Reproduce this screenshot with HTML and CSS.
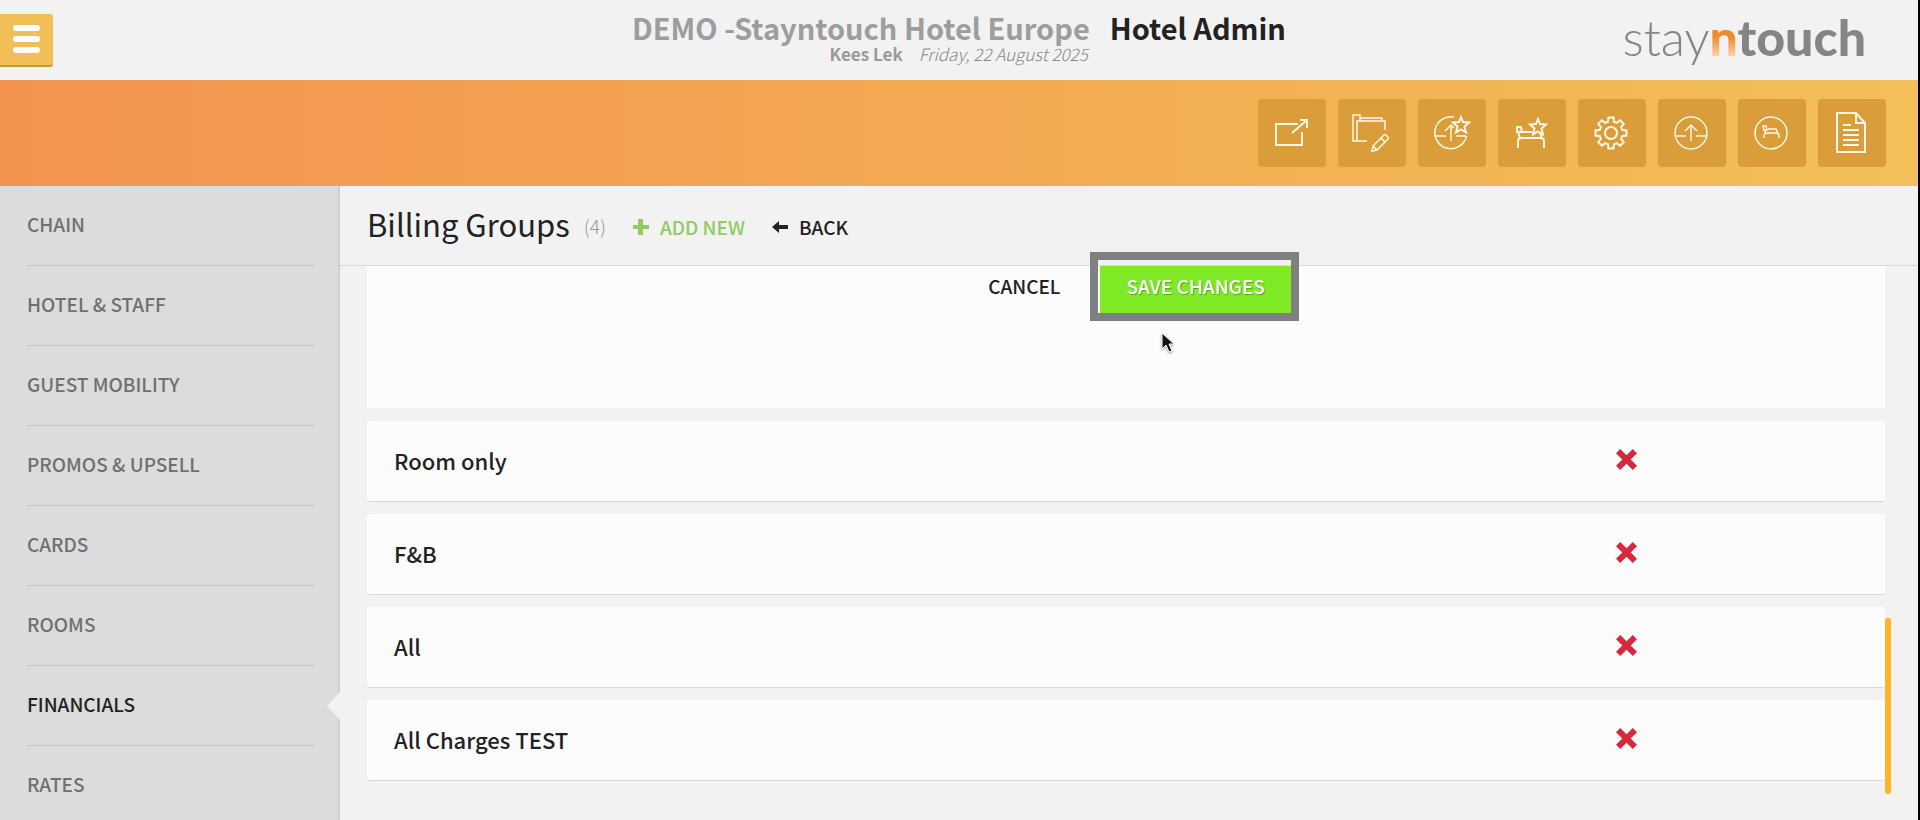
FILE: index.html
```
<!DOCTYPE html>
<html lang="en">
    <head>
        <meta charset="UTF-8" />
        <meta name="viewport" content="width=device-width, initial-scale=1.0" />
        <title>Stayntouch - Hotel Admin</title>
        <link rel="stylesheet" href="styles.css">
    </head>
    <body>
        <header class="header">
            <button type="button" class="menu-button" aria-label="Menu">
                <span></span>
                <span></span>
                <span></span>
            </button>
            <div class="header-title">
                <h1 class="hotel-name">DEMO -Stayntouch Hotel Europe</h1>
                <span class="page-name">Hotel Admin</span>
                <p class="user-info"><strong>Kees Lek</strong><em>Friday, 22 August 2025</em></p>
            </div>
            <div class="logo">stay<b class="logo-n">n</b><b>touch</b></div>
        </header>

        <div class="toolbar">
            <button type="button" class="tool" aria-label="Open">
                <svg viewBox="0 0 68 68">
                    <path d="M40 25H18v21h26V33M34 34l15-13M42 21h7v8" />
                </svg>
            </button>
            <button type="button" class="tool" aria-label="Edit folders">
                <svg viewBox="0 0 68 68" class="thin">
                    <path d="M29 42H15V16h7v3h22v2M19 42V22h28v9M19 22h3v-3" />
                    <path d="M34 52l1-5 11-11q1-1 2 0l2 2q1 1 0 2L39 51zM43 39l4 4M35 47l4 4" />
                </svg>
            </button>
            <button type="button" class="tool" aria-label="Special upgrades">
                <svg viewBox="0 0 68 68" class="thin">
                    <path d="M36 18a16 16 0 1 0 12.500 19" />
                    <path d="M33 42V27M27 32l6-6 3 3M17 37h11M38 37h10" />
                    <path class="bold" d="M43 18l2 5 6 .5-4.500 4 1.500 6-5-3-5 3 1.500-6-4.500-4 6-.5z" />
                </svg>
            </button>
            <button type="button" class="tool" aria-label="Special rooms">
                <svg viewBox="0 0 68 68">
                    <path d="M20 49v-7q0-3 4-3h18q4 0 4 3v7" />
                    <path d="M19 28h4l1 5h-5zM20 33l2 6M24 33h10M42 34l2 5" />
                    <path d="M40 20l2 5 6 .5-4.500 4 1.500 6-5-3-5 3 1.500-6-4.500-4 6-.5z" />
                </svg>
            </button>
            <button type="button" class="tool" aria-label="Settings">
                <svg viewBox="0 0 68 68">
                    <circle cx="33" cy="34" r="6" />
                    <path transform="translate(33 34)" d="M-3-11.300L-2.500-15.500H2.500L3-11.300 5.900-10.100 9.200-12.700 12.700-9.200 10.100-5.900 11.300-3 15.500-2.500V2.500L11.300 3 10.100 5.900 12.700 9.200 9.200 12.700 5.900 10.100 3 11.300 2.500 15.500H-2.500L-3 11.300-5.900 10.100-9.200 12.700-12.700 9.200-10.100 5.900-11.300 3-15.500 2.500V-2.500L-11.300-3-10.100-5.900-12.700-9.200-9.200-12.700-5.900-10.100z" />
                </svg>
            </button>
            <button type="button" class="tool" aria-label="Upgrades">
                <svg viewBox="0 0 68 68" class="thin">
                    <circle cx="33" cy="34" r="16" />
                    <path d="M33 42V26M27 32l6-6 6 6M17 37h11M38 37h11" />
                </svg>
            </button>
            <button type="button" class="tool" aria-label="Rooms">
                <svg viewBox="0 0 68 68" class="thin">
                    <circle cx="33" cy="34" r="16" />
                    <path d="M26 39v-2q0-3 4-3h7q4 0 4 3v2M25 27h3l1 4h-3zM26 31l2 3M30 30h8l2 4" />
                </svg>
            </button>
            <button type="button" class="tool" aria-label="Documents">
                <svg viewBox="0 0 68 68">
                    <path d="M38 14H19v39h28V24zV24h9M25 26h8M25 31h16M25 36h16M25 41h16M25 46h16" />
                </svg>
            </button>
        </div>

        <div class="layout">
            <nav class="sidebar">
                <a href="#">CHAIN</a>
                <a href="#">HOTEL &amp; STAFF</a>
                <a href="#">GUEST MOBILITY</a>
                <a href="#">PROMOS &amp; UPSELL</a>
                <a href="#">CARDS</a>
                <a href="#">ROOMS</a>
                <a href="#" class="active">FINANCIALS</a>
                <a href="#">RATES</a>
            </nav>

            <main class="content">
                <div class="content-header">
                    <h2>Billing Groups</h2>
                    <span class="count">(4)</span>
                    <button type="button" class="link-button add">
                        <svg viewBox="0 0 16 16"><path d="M5 0h5v6h6v4h-6v6H5v-6H0V6h5z" /></svg>
                        ADD NEW
                    </button>
                    <button type="button" class="link-button back">
                        <svg viewBox="0 0 16 16"><path d="M0 8l7-6v4h9v4H7v4z" /></svg>
                        BACK
                    </button>
                </div>

                <div class="groups">
                    <div class="form-card">
                        <button type="button" class="cancel-button">CANCEL</button>
                        <div class="save">
                            <button type="button" class="save-button">SAVE CHANGES</button>
                            <svg class="cursor" viewBox="0 0 14 22">
                                <path d="M1 1v16l4-4 3 7 3-1-3-7h5z" />
                            </svg>
                        </div>
                    </div>
                    <ul class="group-list">
                        <li>
                            <a href="#">Room only</a>
                            <button type="button" class="delete" aria-label="Delete Room only">
                                <svg viewBox="0 0 20 20"><path d="M0 4l4-4 6 6 6-6 4 4-6 6 6 6-4 4-6-6-6 6-4-4 6-6z" /></svg>
                            </button>
                        </li>
                        <li>
                            <a href="#">F&amp;B</a>
                            <button type="button" class="delete" aria-label="Delete F&amp;B">
                                <svg viewBox="0 0 20 20"><path d="M0 4l4-4 6 6 6-6 4 4-6 6 6 6-4 4-6-6-6 6-4-4 6-6z" /></svg>
                            </button>
                        </li>
                        <li>
                            <a href="#">All</a>
                            <button type="button" class="delete" aria-label="Delete All">
                                <svg viewBox="0 0 20 20"><path d="M0 4l4-4 6 6 6-6 4 4-6 6 6 6-4 4-6-6-6 6-4-4 6-6z" /></svg>
                            </button>
                        </li>
                        <li>
                            <a href="#">All Charges TEST</a>
                            <button type="button" class="delete" aria-label="Delete All Charges TEST">
                                <svg viewBox="0 0 20 20"><path d="M0 4l4-4 6 6 6-6 4 4-6 6 6 6-4 4-6-6-6 6-4-4 6-6z" /></svg>
                            </button>
                        </li>
                    </ul>
                    <div class="scrollbar"></div>
                </div>
            </main>
        </div>
    </body>
</html>
```
FILE: styles.css
```
* {
    box-sizing: border-box;
    margin: 0;
    padding: 0;
}

body {
    display: flex;
    flex-direction: column;
    height: 100vh;
    overflow: hidden;
    background-color: #f2f2f2;
    border-right: 2px solid #000;
    color: #222;
    font-family: "Noto Sans CJK SC", "Open Sans", sans-serif;
    font-size: 19px;
    line-height: 24px;
}

button {
    border: none;
    background: none;
    font: inherit;
    cursor: pointer;
}

a {
    color: inherit;
    text-decoration: none;
}

svg {
    display: block;
}

/* Header */
.header {
    display: grid;
    grid-template-columns: 1fr auto 1fr;
    align-items: center;
    height: 80px;
    flex-shrink: 0;
}

.menu-button {
    display: flex;
    flex-direction: column;
    align-items: center;
    justify-content: center;
    gap: 5px;
    width: 53px;
    height: 53px;
    background-color: #f2be57;
    border-bottom: 2px solid #c29846;
    border-radius: 0 3px 3px 0;
}

.menu-button span {
    width: 27px;
    height: 6px;
    border-radius: 3px;
    background-color: #fff;
}

.header-title {
    display: grid;
    grid-template-columns: auto auto;
    column-gap: 20px;
    padding-bottom: 7px;
}

.hotel-name,
.page-name {
    font-size: 29px;
    font-weight: 700;
    line-height: 34px;
}

.hotel-name {
    color: #9d9d9d;
}

.user-info {
    display: flex;
    justify-content: flex-end;
    gap: 16px;
    padding-right: 2px;
    color: #9a9a9a;
    font-size: 17px;
    line-height: 20px;
}

.user-info em {
    color: #888;
    font-weight: 300;
}

.logo {
    justify-self: end;
    padding: 0 52px 6px 0;
    color: #858585;
    font-family: Lato, sans-serif;
    font-size: 50px;
    font-weight: 300;
    line-height: 60px;
}

.logo b {
    font-weight: 900;
}

.logo .logo-n {
    background: linear-gradient(#f08a2c 50%, #fbd9b8 85%);
    background-clip: text;
    color: transparent;
}

/* Toolbar */
.toolbar {
    display: flex;
    align-items: center;
    justify-content: flex-end;
    gap: 12px;
    height: 106px;
    flex-shrink: 0;
    padding-right: 32px;
    background: linear-gradient(to right, #f3934f, #f3b053 65%, #f2bf58);
}

.tool {
    width: 68px;
    height: 68px;
    border-radius: 4px;
    background-color: #da9d3a;
}

.tool svg {
    width: 68px;
    height: 68px;
    fill: none;
    stroke: #fff8e8;
    stroke-width: 2;
}

.tool .thin {
    stroke-width: 1.5;
}

.tool .bold {
    stroke-width: 2;
}

/* Sidebar */
.layout {
    display: flex;
    flex: 1;
    min-height: 0;
}

.sidebar {
    width: 340px;
    flex-shrink: 0;
    padding: 0 24px 0 27px;
    background-color: #dcdcdc;
    border-right: 2px solid #cfcfcf;
}

.sidebar a {
    position: relative;
    display: flex;
    align-items: center;
    height: 80px;
    padding-bottom: 4px;
    border-bottom: 1px solid #c4c4c4;
    color: #707070;
    font-weight: 500;
}

.sidebar .active {
    color: #222;
}

.sidebar .active::after {
    content: "";
    position: absolute;
    top: 26px;
    right: -26px;
    width: 13px;
    height: 28px;
    background-color: #f2f2f2;
    clip-path: polygon(100% 0, 100% 100%, 0 50%);
}

/* Content */
.content {
    flex: 1;
    min-width: 0;
}

.content-header {
    display: flex;
    align-items: center;
    height: 80px;
    padding-left: 27px;
    border-bottom: 1px solid #d8d8d8;
}

.content-header h2 {
    padding-bottom: 4px;
    font-size: 31px;
    font-weight: 400;
    line-height: 40px;
}

.count {
    margin: 0 27px 0 14px;
    color: #999;
    font-weight: 300;
}

.link-button {
    display: flex;
    align-items: center;
    gap: 11px;
    margin-right: 27px;
    padding-top: 2px;
    color: #222;
    font-weight: 500;
}

.link-button svg {
    width: 16px;
    height: 16px;
    fill: currentColor;
}

.add {
    color: #8fcb62;
}

.groups {
    position: relative;
    padding: 0 33px 0 27px;
}

.form-card {
    display: flex;
    justify-content: center;
    gap: 13px;
    padding-bottom: 95px;
    background-color: #fcfcfc;
}

.cancel-button {
    height: 47px;
    padding: 0 27px 8px;
    color: #222;
    font-weight: 500;
}

.save {
    position: relative;
}

.save-button {
    height: 47px;
    padding: 0 26px 8px;
    background-color: #7eea26;
    color: #fff;
    font-weight: 500;
    text-shadow: 1px 1px 1px rgba(0, 0, 0, 0.3);
}

/* Highlight frame around the save button */
.save::after {
    content: "";
    position: absolute;
    top: -14px;
    right: -8px;
    left: -10px;
    height: 53px;
    border: 8px solid #7f8082;
    pointer-events: none;
}

.cursor {
    position: absolute;
    top: 66px;
    left: 61px;
    width: 14px;
    height: 22px;
    fill: #111;
    stroke: #fff;
    filter: drop-shadow(0 1px 1px rgba(0, 0, 0, 0.4));
}

.group-list {
    display: flex;
    flex-direction: column;
    gap: 12px;
    padding-top: 13px;
    list-style: none;
}

.group-list li {
    display: grid;
    grid-template-columns: 66% 34%;
    align-items: center;
    height: 81px;
    background-color: #fcfcfc;
    border-bottom: 1px solid #d6d6d6;
    border-radius: 3px;
}

.group-list a {
    padding: 0 0 2px 27px;
    font-size: 22px;
    font-weight: 500;
}

.delete {
    justify-self: center;
    padding-bottom: 4px;
}

.delete svg {
    width: 21px;
    height: 21px;
    fill: #d6293e;
}

.scrollbar {
    position: absolute;
    right: 27px;
    bottom: -13px;
    width: 6px;
    height: 176px;
    border-radius: 3px;
    background-color: #fab623;
}
```
